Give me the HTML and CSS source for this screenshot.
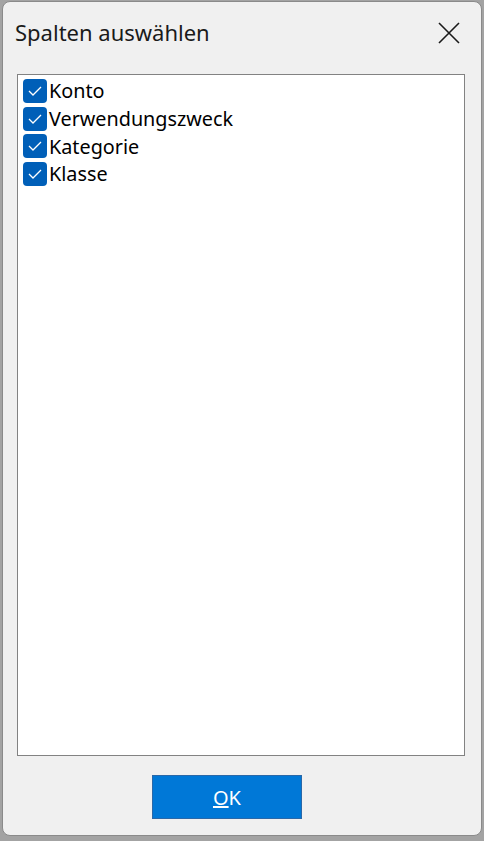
FILE: index.html
```html
<!DOCTYPE html>
<html lang="de">
<head>
    <meta charset="UTF-8">
    <meta name="viewport" content="width=device-width, initial-scale=1.0">
    <title>Spalten auswählen</title>
    <link rel="stylesheet" href="styles.css">
</head>
<body>

<div class="dialog">
    <!-- Title bar -->
    <div class="titlebar">
        <span class="title">Spalten auswählen</span>
        <button class="close" aria-label="Schließen">
            <svg width="22" height="22" viewBox="0 0 22 22">
                <path d="M1 1 L21 21 M21 1 L1 21" stroke="#1a1a1a" stroke-width="1.6" fill="none"/>
            </svg>
        </button>
    </div>

    <!-- Column list -->
    <div class="list">
        <label class="item"><span class="check"><svg width="14" height="10" viewBox="0 0 14 10"><path d="M1 5 L5 9 L13 1" stroke="#fff" stroke-width="1.3" fill="none"/></svg></span>Konto</label>
        <label class="item"><span class="check"><svg width="14" height="10" viewBox="0 0 14 10"><path d="M1 5 L5 9 L13 1" stroke="#fff" stroke-width="1.3" fill="none"/></svg></span>Verwendungszweck</label>
        <label class="item"><span class="check"><svg width="14" height="10" viewBox="0 0 14 10"><path d="M1 5 L5 9 L13 1" stroke="#fff" stroke-width="1.3" fill="none"/></svg></span>Kategorie</label>
        <label class="item"><span class="check"><svg width="14" height="10" viewBox="0 0 14 10"><path d="M1 5 L5 9 L13 1" stroke="#fff" stroke-width="1.3" fill="none"/></svg></span>Klasse</label>
    </div>

    <!-- Footer -->
    <div class="footer">
        <button class="ok"><u>O</u>K</button>
    </div>
</div>

</body>
</html>
```

FILE: styles.css
```css
body {
    margin: 0;
    height: 841px;
    background-color: #a3a3a3;
    font-family: "Noto Sans", "Open Sans", sans-serif;
    overflow: hidden;
}
.dialog {
    margin: 1px 2px 0 2px;
    width: 478px;
    height: 833px;
    border: 1px solid #8a8a8a;
    border-radius: 8px;
    background-color: #f0f0f0;
    display: flex;
    flex-direction: column;
}
.titlebar {
    height: 60px;
    display: flex;
    align-items: center;
    justify-content: space-between;
    padding: 0 21px 0 12px;
}
.title {
    font-size: 22px;
    color: #1a1a1a;
    margin-top: 0;
}
.close {
    border: none;
    background: none;
    padding: 0;
    width: 22px;
    height: 22px;
    margin-top: 2px;
}
.list {
    margin: 12px 16px 0 14px;
    height: 678px;
    background-color: #fff;
    border: 1px solid #828282;
    padding: 2px 0 0 5px;
}
.item {
    display: flex;
    align-items: center;
    height: 27.7px;
    font-size: 19.8px;
    color: #000;
}
.check {
    width: 24px;
    height: 24px;
    border-radius: 4px;
    background-color: #005fb8;
    display: flex;
    align-items: center;
    justify-content: center;
    margin-right: 2px;
}
.footer {
    display: flex;
    justify-content: center;
    padding-top: 19px;
    padding-right: 30px;
}
.ok {
    width: 150px;
    height: 44px;
    background-color: #0078d7;
    border: 1px solid #2a68a8;
    color: #fff;
    font-family: "Noto Sans", sans-serif;
    font-size: 20px;
    padding: 0;
}
```
